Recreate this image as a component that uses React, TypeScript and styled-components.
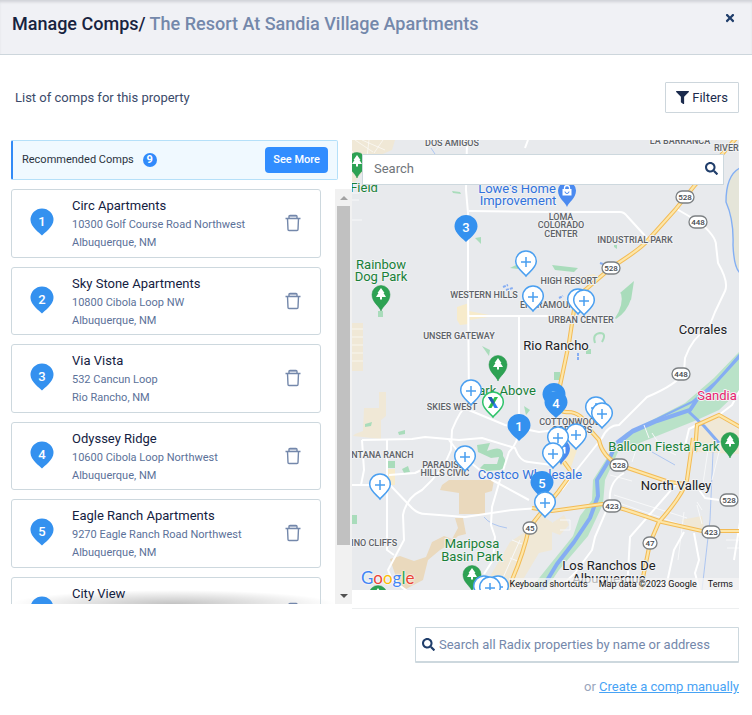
import React from "react";
import styled, { createGlobalStyle } from "styled-components";
import { FaFilter, FaSearch, FaTimes } from "react-icons/fa";

const GlobalStyle = createGlobalStyle`
  *, *::before, *::after { box-sizing: border-box; }
  body { margin: 0; background: #fff; font-family: Roboto, "Liberation Sans", sans-serif; color: #1b2b4d; }
  button, input { font-family: inherit; }
`;

const Header = styled.header`
  display: flex;
  align-items: flex-start;
  justify-content: space-between;
  height: 55px;
  padding: 12px 16px 0 12px;
  background: #f0f1f5;
  border-bottom: 1px solid #cdd6dc;
  box-shadow: inset 0 3px 3px -1px rgba(60, 65, 80, 0.18);
`;

const Title = styled.h1`
  margin: 0;
  font-size: 18px;
  line-height: 24px;
  font-weight: 500;
  color: #17233f;
`;

const PropertyName = styled.span`
  color: #7488ab;
`;

const CloseButton = styled.button`
  display: flex;
  padding: 0;
  border: 0;
  background: none;
  color: #203e6b;
  font-size: 12px;
`;

const Toolbar = styled.div`
  display: flex;
  align-items: center;
  justify-content: space-between;
  padding: 27px 13px 27px 15px;
`;

const Intro = styled.p`
  margin: 0;
  font-size: 13px;
  line-height: 19px;
  color: #3b4a6a;
`;

const FilterButton = styled.button`
  display: flex;
  align-items: center;
  gap: 3px;
  height: 31px;
  padding: 0 10px;
  border: 1px solid #cdd6dc;
  border-radius: 1px;
  background: #fff;
  color: #1b2b4d;
  font-size: 13px;
  line-height: 18px;
  svg { font-size: 13px; }
`;

const Content = styled.main`
  display: grid;
  grid-template-columns: minmax(0, 341fr) minmax(0, 387fr);
  align-items: start;
  padding: 0 13px 20px 11px;
`;

const Banner = styled.section`
  display: flex;
  align-items: center;
  height: 40px;
  margin-right: 14px;
  padding: 0 9px;
  background: #f0f9ff;
  border: 1px solid #b5e0f9;
  border-left: 2px solid #318af6;
  border-radius: 2px;
`;

const BannerLabel = styled.h2`
  margin: 0;
  font-size: 11px;
  line-height: 16px;
  font-weight: 400;
  color: #2b3340;
`;

const CountBadge = styled.span`
  display: grid;
  place-items: center;
  width: 14px;
  height: 14px;
  margin-left: 9px;
  border-radius: 50%;
  background: #318afb;
  color: #fff;
  font-size: 11px;
  line-height: 14px;
  font-weight: 700;
`;

const SeeMoreButton = styled.button`
  height: 26px;
  margin-left: auto;
  padding: 0 8px 2px;
  border: 0;
  border-radius: 4px;
  background: #318dff;
  color: #fff;
  font-size: 11px;
  font-weight: 500;
`;

const ListArea = styled.div`
  display: grid;
  grid-template-columns: minmax(0, 1fr) 17px;
  height: 415px;
  margin-top: 9px;
`;

const Scroller = styled.div`
  overflow-y: auto;
  scrollbar-width: none;
  padding-right: 14px;
  background: radial-gradient(farthest-side at 50% 100%, rgba(0, 0, 0, 0.24), rgba(0, 0, 0, 0)) no-repeat bottom / 100% 14px;
`;

const CardList = styled.ul`
  display: grid;
  grid-auto-rows: 1fr;
  gap: 9px;
  min-height: 456px;
  margin: 0;
  padding: 0;
  list-style: none;
`;

const Card = styled.li`
  display: grid;
  grid-template-columns: 60px minmax(0, 1fr) 54px;
  align-items: center;
  border: 1px solid #cdd8de;
  border-radius: 3px;
`;

const PinSlot = styled.div`
  display: flex;
  justify-content: center;
  padding-bottom: 2px;
`;

const CardText = styled.div`
  padding-top: 2px;
`;

const CardName = styled.h3`
  margin: 0;
  font-size: 13px;
  line-height: 20px;
  font-weight: 400;
  color: #14213f;
`;

const CardLine = styled.p`
  margin: 0;
  font-size: 11px;
  line-height: 18px;
  color: #5b7199;
`;

const DeleteButton = styled.button`
  display: flex;
  justify-content: center;
  padding: 0;
  border: 0;
  background: none;
  color: #7488ab;
`;

const ScrollTrack = styled.div`
  display: grid;
  grid-template-rows: 17px minmax(0, 1fr) 17px;
  justify-items: center;
  background: #f1f1f1;
`;

const ScrollThumb = styled.div`
  width: 13px;
  height: 89%;
  background: #c1c1c1;
`;

const ScrollArrow = styled.div<{ $down?: boolean }>`
  align-self: center;
  border: 4px solid transparent;
  border-top-width: ${(p) => (p.$down ? "4px" : "0")};
  border-bottom-width: ${(p) => (p.$down ? "0" : "4px")};
  border-top-color: ${(p) => (p.$down ? "#505050" : "transparent")};
  border-bottom-color: ${(p) => (p.$down ? "transparent" : "#a3a3a3")};
`;

const MapPanel = styled.section`
  position: relative;
  height: 450px;
  overflow: hidden;
  background: #e8eaed;
`;

const MapSvg = styled.svg`
  display: block;
  width: 100%;
  height: 100%;
  font-family: Roboto, "Liberation Sans", sans-serif;
`;

const MapSearch = styled.form`
  position: absolute;
  top: 14px;
  left: 10px;
  right: 15px;
  display: flex;
  align-items: center;
  height: 31px;
  padding: 0 5px 2px 11px;
  background: #fff;
  border: 1px solid #cdd8de;
`;

const TextInput = styled.input<{ $tone: string }>`
  flex: 1;
  min-width: 0;
  padding: 0;
  border: 0;
  outline: 0;
  background: transparent;
  color: #1b2b4d;
  font-size: 13px;
  line-height: 18px;
  &::placeholder { color: ${(p) => p.$tone}; opacity: 1; }
`;

const IconButton = styled.button`
  display: flex;
  padding: 0;
  border: 0;
  background: none;
  color: #203e6b;
  font-size: 13px;
`;

const GoogleMark = styled.a`
  position: absolute;
  left: 9px;
  bottom: 1px;
  font-family: Lato, sans-serif;
  font-size: 17px;
  line-height: 22px;
  font-weight: 400;
  text-decoration: none;
  text-shadow: 0 0 2px #fff, 0 0 2px #fff;
`;

const Letter = styled.span<{ $color: string }>`
  color: ${(p) => p.$color};
`;

const Attribution = styled.div`
  position: absolute;
  right: 0;
  bottom: 0;
  display: flex;
  gap: 11px;
  padding: 0 6px 0 1px;
  background: rgba(245, 245, 245, 0.72);
  color: #111;
  font-size: 9px;
  line-height: 12px;
`;

const KeyboardButton = styled.button`
  padding: 0;
  border: 0;
  background: none;
  color: inherit;
  font-size: inherit;
  line-height: inherit;
`;

const TermsLink = styled.a`
  color: inherit;
  text-decoration: none;
`;

const Footer = styled.footer`
  display: flex;
  flex-direction: column;
  align-items: flex-end;
  margin-top: 18px;
  padding-top: 18px;
  border-top: 1px solid #edeff0;
`;

const PropertySearch = styled.form`
  display: flex;
  align-items: center;
  gap: 4px;
  width: 324px;
  max-width: 100%;
  height: 36px;
  padding: 0 6px;
  border: 1px solid #cdd8de;
  border-bottom-width: 2px;
  border-radius: 1px;
`;

const ManualLine = styled.p`
  margin: 14px 0 0;
  font-size: 13px;
  line-height: 20px;
  color: #9aa6bc;
`;

const ManualLink = styled.a`
  color: #47a3f5;
  text-decoration: underline;
`;

const PIN_SHAPE = "M0 0C-2-2.4-11.5-8.500-11.500-15.500A11.500 11.500 0 0 1 11.500-15.500C11.500-8.500 2-2.400 0 0Z";
const OUTLINE_SHAPE = "M0 0C-2-3-10.300-8-10.300-14.700A10.300 10.300 0 0 1 10.300-14.700C10.300-8 2-3 0 0Z";
const POI_SHAPE = "M0 0C-1.500-5-9-8.500-9-16.500A9 9 0 0 1 9-16.500C9-8.500 1.500-5 0 0Z";

type Point = { x: number; y: number };

const NumberPin = ({ x, y, label }: Point & { label?: string }) => (
  <g transform={`translate(${x} ${y})`}>
    <path d={PIN_SHAPE} fill="#3491ef" />
    {label && (
      <text y={-10} textAnchor="middle" fontSize={13} fontWeight={500} fill="#fff">{label}</text>
    )}
  </g>
);

const PlusPin = ({ x, y }: Point) => (
  <g transform={`translate(${x} ${y})`}>
    <path d={OUTLINE_SHAPE} fill="#fff" stroke="#4a9ff0" strokeWidth={1.5} />
    <path d="M-5-14H5M0-19V-9" stroke="#4a9ff0" strokeWidth={1.5} />
  </g>
);

const SubjectPin = ({ x, y }: Point) => (
  <g transform={`translate(${x} ${y})`}>
    <path d={OUTLINE_SHAPE} fill="#fff" stroke="#2fc36b" strokeWidth={1.5} />
    <path d="M-5-20H-1.500L5-9H1.500Z" fill="#2f7bf0" />
    <path d="M1.500-20H5L-1.500-9H-5Z" fill="#2fbf4a" />
    <path d="M-5-20H-1.500L1.500-15L0-12Z" fill="#1f5fae" />
  </g>
);

const TreePin = ({ x, y }: Point) => (
  <g transform={`translate(${x} ${y})`}>
    <path d={POI_SHAPE} fill="#2da253" stroke="#1f8f45" strokeWidth={0.5} />
    <path d="M0-23L3.500-18H2.500L5-14H1V-11.500H-1V-14H-5L-2.500-18H-3.500Z" fill="#fff" />
  </g>
);

const ShopPin = ({ x, y }: Point) => (
  <g transform={`translate(${x} ${y})`}>
    <path d={POI_SHAPE} fill="#4b8af0" />
    <path d="M-4.500-18H4.500V-11.500H-4.500Z" fill="#fff" />
    <path d="M-2.500-18V-19A2.500 2.500 0 0 1 2.500-19V-18" fill="none" stroke="#fff" strokeWidth={1.3} />
    <path d="M-2-15.500A2 2 0 0 0 2-15.500" fill="none" stroke="#4b8af0" />
  </g>
);

const Shield = ({ x, y, label }: Point & { label: string }) => {
  const half = label.length > 2 ? 9 : 7;
  return (
    <g transform={`translate(${x} ${y})`}>
      <rect x={-half} y={-6} width={half * 2} height={12} rx={6} fill="#fff" stroke="#7c8083" strokeWidth={1.3} />
      <text y={3} textAnchor="middle" fontSize={8} fontWeight={500} fill="#45494d">{label}</text>
    </g>
  );
};

const MapLabel = styled.text<{ $kind: "area" | "city" | "park" | "shop" | "fun" }>`
  paint-order: stroke;
  stroke: #f1f2f4;
  stroke-width: 2px;
  stroke-linejoin: round;
  font-size: ${(p) => (p.$kind === "area" ? "9px" : "13px")};
  font-weight: ${(p) => (p.$kind === "area" ? 500 : 400)};
  fill: ${(p) => ({ area: "#5e6267", city: "#202124", park: "#188038", shop: "#3273dc", fun: "#e6246e" })[p.$kind]};
`;

const highways = [
  "M386-4L343 45 323 70 296 100Q290 108 260 127L233 150Q224 156 222 170L217 203 205 260Q206 273 216 272Q230 272 238 290L247 300Q250 316 267 325L317 342 333 344",
  "M180 368L200 371 250 364Q262 365 310 382L350 391H388",
  "M341 298L335 340Q331 355 307 382L298 403 288 452",
  "M188 374L177 388Q172 412 160 440L155 452",
  "M343 312L345 285 367 275 388 287",
  "M188 374L206 352 220 333 212 322",
];

const streets = [
  "M115 0L114 50 116 73V150L117 263Q108 270 100 290L99 310Q92 330 70 350 54 358 51 375L52 400 36 430 40 440 62 456",
  "M117 71L200 72H268Q272 72 275 76L295 98",
  "M117 176H210M167 177V290Q166 303 157 312L147 343 140 367 139 385 143 397 141 420 132 434",
  "M112 268L153 285 187 292 204 290",
  "M10 300L60 299 73 297 107 300 130 298 163 308Q168 322 177 322L200 325",
  "M10 300L12 330 9 345M35 300V410L42 415",
  "M0 345H38L60 368Q66 374 74 374L113 377 160 370 187 368",
  "M97 300L107 313 140 340 177 360",
  "M37 335L63 333 78 326",
  "M323 68L347 82Q364 96 364 105L366 123Q377 142 373 151L363 172 357 187Q340 198 333 218L332 232Q326 244 295 257L267 285Q256 285 250 298L223 332 210 350",
  "M332 310L337 289 345 285M367 275L380 265 388 250",
  "M340 340L353 358 367 360H388",
  "M272 333Q256 342 258 362L243 397 240 410 223 433 200 455",
  "M325 343L313 357 278 397 275 450M332 392L322 410 313 452M342 393L347 420 343 433 348 452",
  "M176 0L173 8M388 382L382 420",
];

const lanes = [
  "M258 335L280 341M262 355L335 378M264 362L330 385M285 307L280 322M300 293L310 308 324 315",
  "M332 372L326 420M345 365L350 384M356 310L350 350M370 300L360 340M374 400H388M375 408H388",
  "M0 53H7M0 60H7M150 440L168 400M158 418L168 422M160 400L170 404",
  "M297 298L292 285M0 80H10M208 380H218V390H208M330 440L328 452M350 370L345 362",
];

const parks = [
  "M100 51L108 52 109 54 101 53Z", "M123 98L129 97V104Z", "M158 128L166 124V129Z",
  "M200 125L226 128 222 132 203 130Z", "M268 153L282 141 279 160Z", "M262 105H265V109L262 107Z",
  "M269 153L279 159Q275 172 264 179L263 178Q272 165 269 153Z", "M26 171H31V177H26Z",
  "M130 206L138 210 137 216Z", "M202 232H208V240H202Z", "M234 209H239V214H234Z",
  "M172 266L178 270 174 275Z", "M46 292L53 290V294L47 295Z", "M13 284L20 282 19 286 13 287Z",
  "M0 375H5V384H0Z", "M36 321H43V328H36Z", "M50 329L56 326 58 332 52 333Z",
];

const areaLabels: [number, number, string][] = [
  [100, 6, "DOS AMIGOS"], [328, 4, "LA BARRANCA"], [377, 11, "RIVERS"],
  [209, 80, "LOMA"], [209, 88, "COLORADO"], [209, 97, "CENTER"],
  [283, 103, "INDUSTRIAL PARK"], [217, 144, "HIGH RESORT"], [132, 158, "WESTERN HILLS"],
  [198, 168, "ENTRAMOUNT"], [229, 183, "URBAN CENTER"], [107, 199, "UNSER GATEWAY"],
  [100, 270, "SKIES WEST"], [218, 285, "COTTONWOOD"], [220, 293, "CORNERS"],
  [25, 318, "VENTANA RANCH"], [91, 328, "PARADISE"], [93, 336, "HILLS CIVIC"], [16, 406, "CHINO CLIFFS"],
];

const AreaMap = () => (
  <MapSvg viewBox="0 0 387 450" preserveAspectRatio="xMidYMid slice" role="img" aria-label="Map of comps near Rio Rancho">
    <rect x={-400} y={-400} width={1200} height={1300} fill="#e8eaed" />
    <g fill="#f0e8d6">
      <path d="M0 0H43L40 10 26 16 12 30 0 46Z" />
      <path d="M0 183H11V231H0Z" />
      <path d="M27 252H34V276L29 280V299L1 296 3 294 11 291 12 268H27Z" />
      <path d="M105 167L117 163V184L108 185 105 180Z" fill="#f7ebcb" />
      <path d="M117 171L142 176 118 180Z" fill="#f7ebcb" />
      <path d="M35 329H43V345H35Z" fill="#f7ebcb" />
      <path d="M130 450L150 416 158 402 176 390 190 376 200 382V410L187 413 166 448Z" />
      <path d="M200 383L212 375 217 385 208 395 200 392Z" />
      <path d="M345 286L367 277 388 291V314L345 312Z" />
      <path d="M203 305L225 310 218 330 203 322Z" fill="#f7ebcb" />
      <path d="M210 275L236 281 245 296 225 292Z" fill="#f7ebcb" />
      <path d="M224 138L242 134 247 139 228 145Z" fill="#f7ebcb" />
      <path d="M329 380L350 376 352 389 335 386Z" />
    </g>
    <g fill="#ead9bd">
      <path d="M97 340H142L140 351 133 353V374H107V353L88 350 90 345Z" />
      <path d="M103 378H111L114 394 106 396 98 404 88 410 76 420 71 440 54 449 46 443 38 419 48 416 62 421 74 417 80 402 92 396 100 399 106 388Z" />
    </g>
    <path d="M3 0L21 12M10 0L33 10M0 11L13 25M17 0L14 25M31 0L22 13M0 189H11M0 197H11M0 205H11M0 213H11M0 221H11" stroke="#fff" fill="none" opacity={0.6} />
    <path d="M388 28Q374 35 374 62 382 80 381 105 382 128 388 133Z" fill="#e5e5d9" stroke="#83aff3" strokeWidth={1.4} />
    <g fill="#a9dcbb">
      {parks.map((d) => <path key={d} d={d} />)}
      <path d="M125 305L138 303 135 311Q152 304 151 316 158 326 148 330L134 331 128 328 132 324 145 324 147 317 139 318 126 312Z" />
    </g>
    <path d="M388 211L362 238 333 263 300 280 274 293 265 302 255 318 241 340 240 360 228 376 221 396 200 422 176 452H192L207 430 236 396 251 364 253 340 266 312 290 302 320 290 345 280 367 270 388 250Z" fill="#b9e2c8" />
    <g fill="none" stroke="#85adf3" strokeLinejoin="round">
      <path d="M388 214L366 240 340 262 305 279 280 290 264 302" strokeWidth={2} />
      <path d="M350 252L338 270 305 281 280 292 263 306 256 322 245 340 246 356 238 378 222 402 205 424 188 452" strokeWidth={4} />
      <path d="M388 216L366 240 348 260" strokeWidth={3} />
      <path d="M337 272L352 286 367 303" strokeWidth={3} />
      <path d="M361 312L358 380 350 450M300 312L323 325M132 377Q138 385 155 388M79 8L83 14" strokeWidth={1} opacity={0.6} />
      <path d="M151 147L156 145M154 150L161 148M226 213V220M207 158L211 156M248 123L251 124" strokeWidth={2} strokeDasharray="3 1" />
    </g>
    <path d="M243 203Q240 194 248 193 255 193 250 202" fill="none" stroke="#a9dcbb" strokeWidth={2} />
    <g fill="none" stroke="#f7f8f9">{lanes.map((d) => <path key={d} d={d} />)}</g>
    <g fill="none" stroke="#fff" strokeWidth={2} strokeLinejoin="round">
      {streets.map((d) => <path key={d} d={d} />)}
    </g>
    <g fill="none" stroke="#f3bb55" strokeWidth={4.2}>{highways.map((d) => <path key={d} d={d} />)}</g>
    <g fill="none" stroke="#fde6a8" strokeWidth={2.2}>{highways.map((d) => <path key={d} d={d} />)}</g>

    <Shield x={333} y={57} label="528" />
    <Shield x={346} y={82} label="448" />
    <Shield x={259} y={128} label="528" />
    <Shield x={329} y={234} label="448" />
    <Shield x={267} y={325} label="528" />
    <Shield x={377} y={360} label="528" />
    <Shield x={260} y={366} label="423" />
    <Shield x={359} y={392} label="423" />
    <Shield x={298} y={403} label="47" />
    <Shield x={178} y={388} label="45" />

    <TreePin x={5} y={38} />
    <TreePin x={29} y={171} />
    <TreePin x={146} y={241} />
    <TreePin x={378} y={318} />
    <TreePin x={120} y={451} />
    <TreePin x={26} y={471} />
    <ShopPin x={215} y={67} />
    <ShopPin x={209} y={325} />

    {areaLabels.map(([x, y, name]) => (
      <MapLabel key={name} x={x} y={y} textAnchor="middle" $kind="area">{name}</MapLabel>
    ))}
    <g textAnchor="middle">
      <MapLabel x={204} y={210} $kind="city">Rio Rancho</MapLabel>
      <MapLabel x={351} y={194} $kind="city">Corrales</MapLabel>
      <MapLabel x={324} y={350} $kind="city">North Valley</MapLabel>
      <MapLabel x={257} y={430} $kind="city">Los Ranchos De</MapLabel>
      <MapLabel x={257} y={443} $kind="city">Albuquerque</MapLabel>
      <MapLabel x={12} y={52} $kind="park">Field</MapLabel>
      <MapLabel x={29} y={129} $kind="park">Rainbow</MapLabel>
      <MapLabel x={29} y={141} $kind="park">Dog Park</MapLabel>
      <MapLabel x={151} y={255} $kind="park">Park Above</MapLabel>
      <MapLabel x={312} y={311} $kind="park">Balloon Fiesta Park</MapLabel>
      <MapLabel x={120} y={408} $kind="park">Mariposa</MapLabel>
      <MapLabel x={120} y={421} $kind="park">Basin Park</MapLabel>
      <MapLabel x={165} y={53} $kind="shop">Lowe's Home</MapLabel>
      <MapLabel x={166} y={65} $kind="shop">Improvement</MapLabel>
      <MapLabel x={178} y={339} $kind="shop">Costco Wholesale</MapLabel>
      <MapLabel x={365} y={260} $kind="fun">Sandia</MapLabel>
    </g>

    <NumberPin x={114} y={102} label="3" />
    <PlusPin x={174} y={136} />
    <PlusPin x={181} y={171} />
    <PlusPin x={226} y={174} />
    <PlusPin x={232} y={175} />
    <PlusPin x={119} y={265} />
    <SubjectPin x={141} y={277} />
    <NumberPin x={202} y={270} label="2" />
    <NumberPin x={204} y={278} label="4" />
    <PlusPin x={244} y={282} />
    <PlusPin x={250} y={288} />
    <NumberPin x={167} y={301} label="1" />
    <PlusPin x={224} y={309} />
    <PlusPin x={206} y={312} />
    <PlusPin x={201} y={328} />
    <PlusPin x={113} y={331} />
    <PlusPin x={28} y={359} />
    <NumberPin x={190} y={358} label="5" />
    <PlusPin x={193} y={377} />
    <PlusPin x={132} y={461} />
    <PlusPin x={146} y={461} />
    <PlusPin x={138} y={462} />
  </MapSvg>
);

const TrashIcon = () => (
  <svg width="16" height="18" viewBox="0 0 16 18" fill="none" stroke="currentColor" strokeWidth="1.4" aria-hidden="true">
    <path d="M.5 4.500H15.500M4 4V2.500Q4 1.500 5 1.500H11Q12 1.500 12 2.500V4" />
    <path d="M4.500 2.500H11.500" opacity=".5" />
    <path d="M2.500 4.500L3 15.500Q3 16.500 4 16.500H12Q13 16.500 13 15.500L13.500 4.500" />
  </svg>
);

const comps = [
  { name: "Circ Apartments", street: "10300 Golf Course Road Northwest", city: "Albuquerque, NM" },
  { name: "Sky Stone Apartments", street: "10800 Cibola Loop NW", city: "Albuquerque, NM" },
  { name: "Via Vista", street: "532 Cancun Loop", city: "Rio Rancho, NM" },
  { name: "Odyssey Ridge", street: "10600 Cibola Loop Northwest", city: "Albuquerque, NM" },
  { name: "Eagle Ranch Apartments", street: "9270 Eagle Ranch Road Northwest", city: "Albuquerque, NM" },
  { name: "City View", street: "10700 Fineland Drive Northwest", city: "Albuquerque, NM" },
];

const googleLetters = [
  ["G", "#4285f4"], ["o", "#ea4335"], ["o", "#fbbc04"], ["g", "#4285f4"], ["l", "#34a853"], ["e", "#ea4335"],
];

export default function App() {
  return (
    <>
      <GlobalStyle />
      <Header>
        <Title>
          Manage Comps/ <PropertyName>The Resort At Sandia Village Apartments</PropertyName>
        </Title>
        <CloseButton aria-label="Close"><FaTimes /></CloseButton>
      </Header>
      <Toolbar>
        <Intro>List of comps for this property</Intro>
        <FilterButton><FaFilter />Filters</FilterButton>
      </Toolbar>
      <Content>
        <div>
          <Banner>
            <BannerLabel>Recommended Comps</BannerLabel>
            <CountBadge>9</CountBadge>
            <SeeMoreButton>See More</SeeMoreButton>
          </Banner>
          <ListArea>
            <Scroller>
              <CardList>
                {comps.map((comp, i) => (
                  <Card key={comp.name}>
                    <PinSlot>
                      <svg width="24" height="28" viewBox="-12 -27.500 24 28" aria-hidden="true">
                        <NumberPin x={0} y={0} label={String(i + 1)} />
                      </svg>
                    </PinSlot>
                    <CardText>
                      <CardName>{comp.name}</CardName>
                      <CardLine>{comp.street}</CardLine>
                      <CardLine>{comp.city}</CardLine>
                    </CardText>
                    <DeleteButton aria-label={`Remove ${comp.name}`}><TrashIcon /></DeleteButton>
                  </Card>
                ))}
              </CardList>
            </Scroller>
            <ScrollTrack aria-hidden="true">
              <ScrollArrow />
              <ScrollThumb />
              <ScrollArrow $down />
            </ScrollTrack>
          </ListArea>
        </div>
        <div>
          <MapPanel>
            <AreaMap />
            <MapSearch role="search">
              <TextInput $tone="#70757a" aria-label="Search the map" placeholder="Search" />
              <IconButton type="button" aria-label="Search"><FaSearch /></IconButton>
            </MapSearch>
            <GoogleMark href="#google" aria-label="Google">
              {googleLetters.map(([ch, color], i) => <Letter key={i} $color={color}>{ch}</Letter>)}
            </GoogleMark>
            <Attribution>
              <KeyboardButton>Keyboard shortcuts</KeyboardButton>
              <span>Map data ©2023 Google</span>
              <TermsLink href="#terms">Terms</TermsLink>
            </Attribution>
          </MapPanel>
          <Footer>
            <PropertySearch role="search">
              <IconButton type="button" aria-label="Search properties"><FaSearch /></IconButton>
              <TextInput $tone="#7488ab" aria-label="Search all Radix properties" placeholder="Search all Radix properties by name or address" />
            </PropertySearch>
            <ManualLine>
              or <ManualLink href="#create">Create a comp manually</ManualLink>
            </ManualLine>
          </Footer>
        </div>
      </Content>
    </>
  );
}
